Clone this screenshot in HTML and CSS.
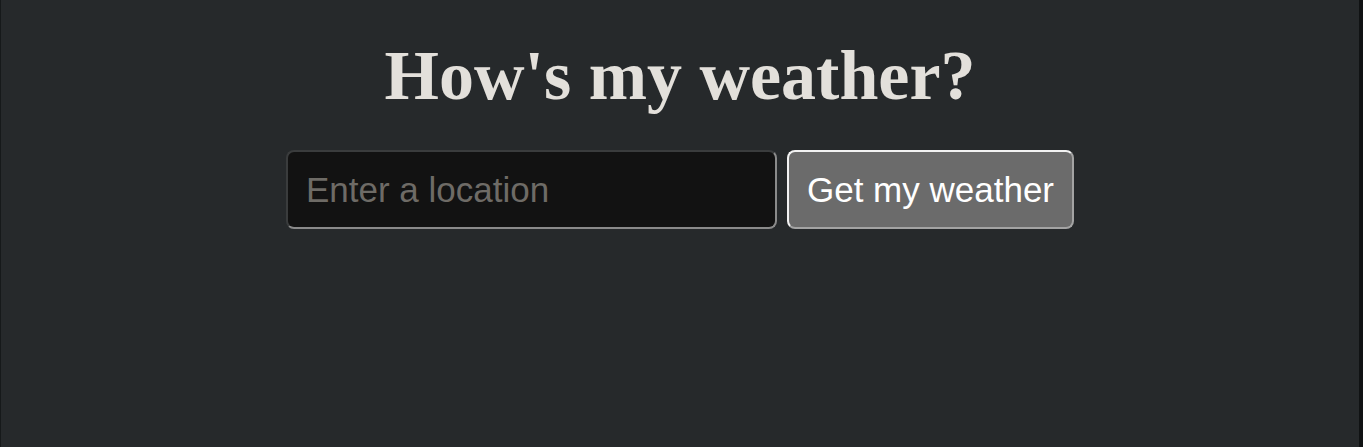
FILE: index.html
```html
<!DOCTYPE html>
<html lang="en">
<head>
<meta charset="utf-8">
<title>How's my weather?</title>
<link rel="stylesheet" href="styles.css">
</head>
<body>
<main class="page">
  <h1 class="title">How's my weather?</h1>
  <form class="search" onsubmit="return false">
    <input class="search-input" type="text" placeholder="Enter a location">
    <button class="search-button" type="submit">Get my weather</button>
  </form>
</main>
</body>
</html>
```

FILE: styles.css
```css
html, body {
  margin: 0;
  height: 100%;
  background: #26292b;
}

.page {
  box-sizing: border-box;
  height: 100%;
  border-left: 1px solid #16191a;
  border-right: 4px solid #101213;
  display: flex;
  flex-direction: column;
  align-items: center;
  padding-top: 36px;
  gap: 34px;
}

.title {
  margin: 0;
  font-family: "Liberation Serif", "Times New Roman", serif;
  font-weight: bold;
  font-size: 70px;
  color: #e3e0db;
}

.search {
  display: flex;
  gap: 10px;
}

.search-input,
.search-button {
  font-family: "Liberation Sans", Arial, sans-serif;
  font-size: 35px;
  padding: 17.5px;
  border-width: 2px;
  border-radius: 8px;
  margin: 0;
}

.search-input {
  width: 452px;
  background: #121212;
  color: #e3e0db;
  border-style: solid;
  border-color: #3a3c3d #8a8a8a #8a8a8a #3a3c3d;
}

.search-input::placeholder {
  color: #6e6b66;
}

.search-button {
  background: #6b6b6b;
  color: #ffffff;
  border-style: solid;
  border-color: #f2f2f2 #a3a3a3 #a3a3a3 #f2f2f2;
}
```
